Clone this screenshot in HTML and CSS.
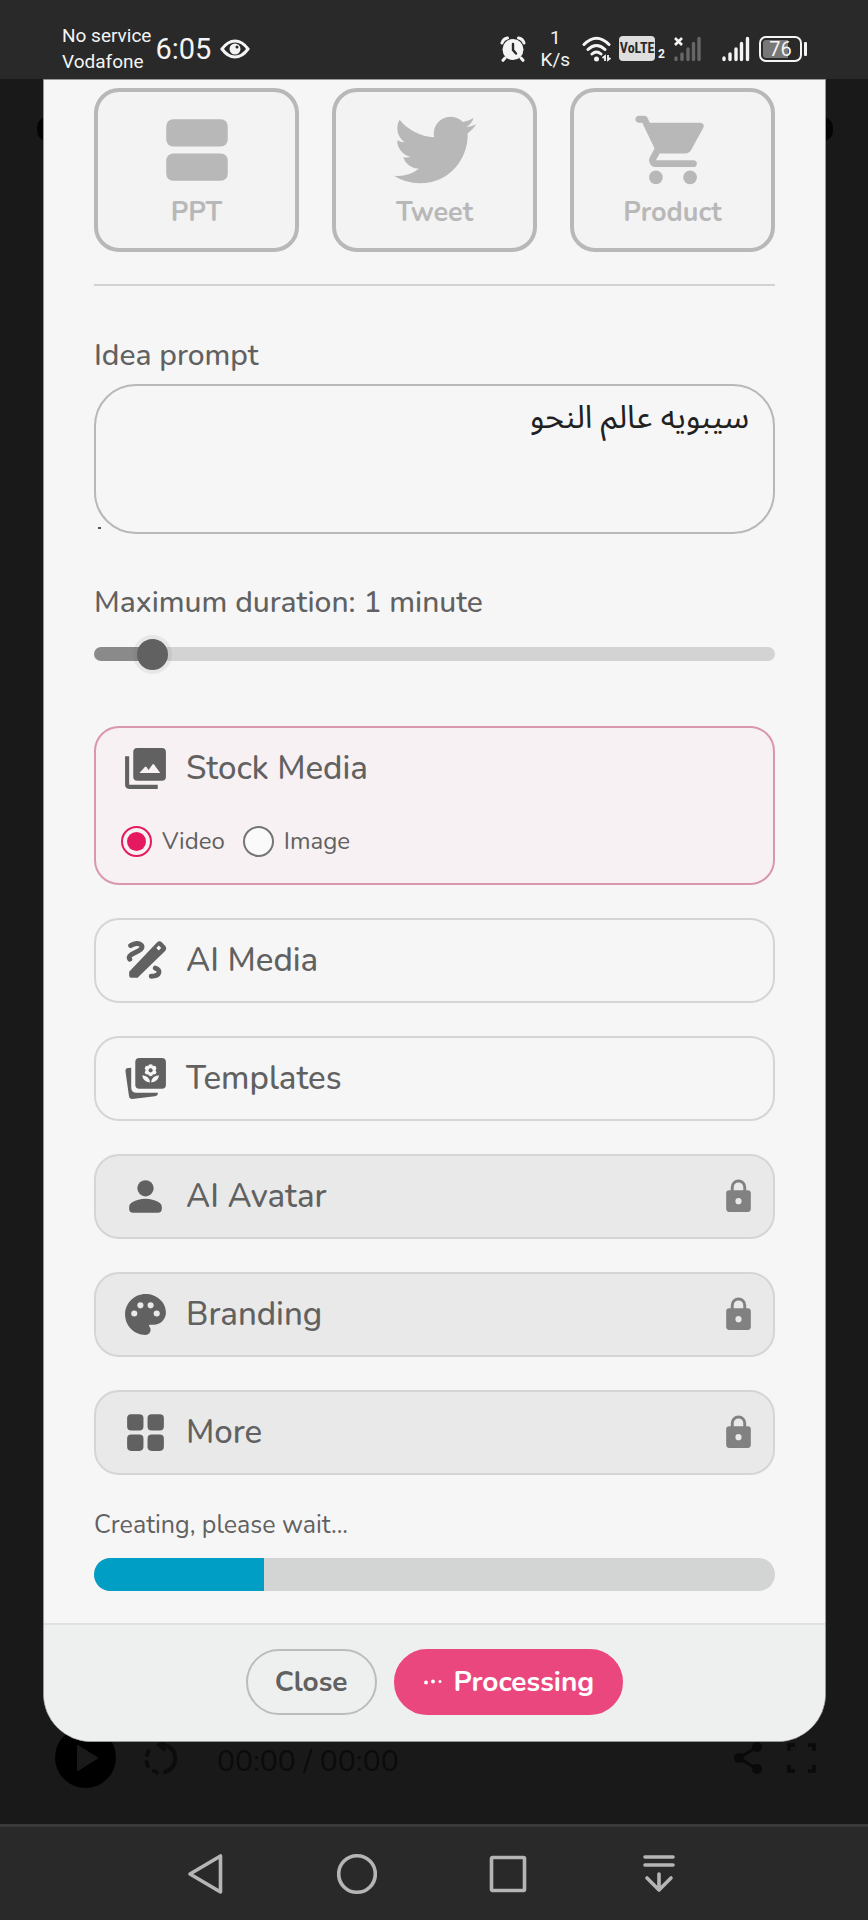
FILE: index.html
```html
<!DOCTYPE html>
<html lang="en">
<head>
<meta charset="utf-8">
<meta name="viewport" content="width=device-width, initial-scale=1">
<title>Create video</title>
<link rel="stylesheet" href="styles.css">
</head>
<body>
<header class="status">
  <div class="status-left">
    <div class="carrier"><span>No service</span><span>Vodafone</span></div>
    <span class="clock">6:05</span>
    <svg class="eye" width="30" height="20" viewBox="0 0 30 20"><path d="M2 10C6 4.500 10 2 15 2s9 2.500 13 8c-4 5.500-8 8-13 8S6 15.500 2 10z" fill="none" stroke="#f4f4f4" stroke-width="3"/><circle cx="15" cy="10" r="5.500" fill="#f4f4f4"/><circle cx="17" cy="8" r="1.500" fill="#292929"/></svg>
  </div>
  <div class="status-right">
    <svg width="26" height="26" viewBox="0 0 26 26"><g stroke="#f4f4f4" stroke-width="3" stroke-linecap="round" fill="none"><path d="M2 7Q3 3 7.500 2M24 7Q23 3 18.500 2M5 22l-2 2.300M21 22l2 2.300"/></g><circle cx="13" cy="13.500" r="10.500" fill="#f4f4f4"/><path d="M13 8v6l3 3.500" fill="none" stroke="#292929" stroke-width="2.400" stroke-linecap="round"/></svg>
    <div class="speed"><span>1</span><span>K/s</span></div>
    <svg width="30" height="26" viewBox="0 0 30 26"><g fill="none" stroke="#f4f4f4" stroke-width="3" stroke-linecap="round"><path d="M2 8.500Q14.500-4 27 8.500M6 13.500q8.500-8 17 0M10 18q4.500-4 9 0"/></g><circle cx="14.500" cy="23" r="2.500" fill="#f4f4f4"/><path d="M20.500 22l2.500-2v5M26 19v5l2.500-2" fill="none" stroke="#f4f4f4" stroke-width="1.800"/></svg>
    <div class="volte"><span class="volte-box">VoLTE</span><span class="volte-sim">2</span></div>
    <svg class="sig-off" width="28" height="26" viewBox="0 0 28 26"><g stroke="#666" stroke-width="3.400" stroke-linecap="round"><path d="M3 22v1.500M9 18v5.500M15 13v10.500M20.500 7.500v16M26 2.500v21"/></g><path d="M2 2l7 7M9 2l-7 7" stroke="#f4f4f4" stroke-width="2.600"/></svg>
    <svg class="sig-on" width="28" height="26" viewBox="0 0 28 26"><g stroke="#f4f4f4" stroke-width="3.400" stroke-linecap="round"><path d="M2 22v1.500M8 18v5.500M14 13v10.500M19.500 7.500v16M25.500 2.500v21"/></g></svg>
    <div class="battery"><span class="battery-body">76</span><i class="battery-tip"></i></div>
  </div>
</header>

<div class="stage">
  <div class="backdrop">
    <i class="gear"></i><i class="knob"></i>
    <div class="player">
      <span class="play"><svg width="61" height="61" viewBox="0 0 61 61"><path d="M23 19v24l19-12z" fill="#1a1a1a" stroke="#1a1a1a" stroke-width="2" stroke-linejoin="round"/></svg></span>
      <svg class="rotate" width="34" height="34" viewBox="0 0 34 34" fill="none" stroke="#0c0c0c" stroke-width="4" stroke-linecap="round"><path d="M17 3.500a14 14 0 0 1 4 27.500M20 0l-5 4 5 4M13 31.500l-3-1.500M4 25l-1.500-4M3 14l1.500-4"/></svg>
      <span class="time">00:00 / 00:00</span>
      <svg class="share" width="28" height="34" viewBox="0 0 28 34"><path d="M23 6L5 17l18 11" fill="none" stroke="#0a0a0a" stroke-width="3"/><g fill="#0a0a0a"><circle cx="23" cy="6" r="5"/><circle cx="5" cy="17" r="5"/><circle cx="23" cy="28" r="5"/></g></svg>
      <svg width="29" height="30" viewBox="0 0 29 30" fill="none" stroke="#0a0a0a" stroke-width="3.500"><path d="M2 8V2h6M21 2h6v6M27 22v6h-6M8 28H2v-6"/></svg>
    </div>
  </div>

  <main class="modal">
    <div class="content">
      <div class="sources">
        <button class="source" type="button"><svg class="source-icon" viewBox="0 0 24 24"><rect x="3" y="3" width="18" height="8" rx="2"/><rect x="3" y="13" width="18" height="8" rx="2"/></svg>PPT</button>
        <button class="source" type="button"><svg class="source-icon" viewBox="0 0 24 24"><path d="M23.953 4.570a10 10 0 0 1-2.825.775 4.958 4.958 0 0 0 2.163-2.723c-.951.555-2.005.959-3.127 1.184a4.920 4.920 0 0 0-8.384 4.482C7.690 8.095 4.067 6.130 1.640 3.162a4.822 4.822 0 0 0-.666 2.475c0 1.710.870 3.213 2.188 4.096a4.904 4.904 0 0 1-2.228-.616v.060a4.923 4.923 0 0 0 3.946 4.827 4.996 4.996 0 0 1-2.212.085 4.936 4.936 0 0 0 4.604 3.417 9.867 9.867 0 0 1-6.102 2.105c-.390 0-.779-.023-1.170-.067a13.995 13.995 0 0 0 7.557 2.209c9.053 0 13.998-7.496 13.998-13.985 0-.210 0-.420-.015-.630A9.935 9.935 0 0 0 24 4.590z"/></svg>Tweet</button>
        <button class="source" type="button"><svg class="source-icon" viewBox="0 0 24 24"><circle cx="7" cy="20" r="2"/><circle cx="17" cy="20" r="2"/><path d="M1 3c0 .550.450 1 1 1h1l3.600 7.590-1.350 2.440C4.520 15.370 5.480 17 7 17h11c.550 0 1-.450 1-1s-.450-1-1-1H7l1.100-2h7.450c.750 0 1.410-.410 1.750-1.030l3.580-6.490A.996.996 0 0 0 20.010 4H5.210l-.670-1.430A1 1 0 0 0 3.640 2H2c-.550 0-1 .450-1 1z"/></svg>Product</button>
      </div>
      <hr class="rule">

      <label class="label" for="prompt">Idea prompt</label>
      <div class="prompt-wrap">
        <textarea class="prompt" id="prompt" dir="rtl" lang="ar" rows="3">سيبويه عالم النحو</textarea>
        <i class="grip"></i>
      </div>

      <label class="label" for="duration">Maximum duration: 1 minute</label>
      <input class="slider" id="duration" type="range" min="0" max="15" value="1">

      <div class="options">
        <section class="option selected">
          <div class="option-head">
            <svg class="option-icon" viewBox="0 0 24 24"><path fill-rule="evenodd" d="M8 2h12a2 2 0 0 1 2 2v12a2 2 0 0 1-2 2H8a2 2 0 0 1-2-2V4a2 2 0 0 1 2-2zm1 12.200h10.200l-3-4.200q-.400-.500-.800 0l-1.900 2.700-1-1.400q-.400-.500-.800 0z"/><path d="M2 6h2v14h14v2H4a2 2 0 0 1-2-2z"/></svg>
            <span>Stock Media</span>
          </div>
          <div class="radios">
            <label class="radio"><input type="radio" name="kind" checked>Video</label>
            <label class="radio"><input type="radio" name="kind">Image</label>
          </div>
        </section>
        <button class="option" type="button">
          <svg class="option-icon" viewBox="0 0 24 24"><g fill="none" stroke="#616161" stroke-width="2.400" stroke-linecap="round"><path d="M4.700 4.700c2-1.200 4.300-1.500 5.300-.200 1 1.500-.800 2.600-3 3.600-2.600 1.100-3.500 2-2.700 3.300M16.800 15.700c3 1 2.300 4-2 4"/></g><path fill-rule="evenodd" d="M4 17.500L17.600 3.200q1.300-1.200 2.500 0l1.500 1.600q1.100 1.200 0 2.500L8.100 20.500H5q-1 0-1-1zM18.500 4.700l-1.200 1.200 1.200 1.200 1.200-1.200z"/></svg>
          <span>AI Media</span>
        </button>
        <button class="option" type="button">
          <svg class="option-icon" viewBox="0 0 24 24"><rect x="7" y="2" width="15" height="15" rx="2"/><path d="M5 6.700v9.600Q5 19 7.700 19h10.400q0 1.500-1.500 1.700L5.500 22q-1.400 0-1.600-1.400L2.200 8.600Q2 7.100 3.600 6.900z"/><g fill="#f6f6f6"><circle cx="14.500" cy="6.200" r="1.200"/><circle cx="12.900" cy="7" r="1.200"/><circle cx="16.100" cy="7" r="1.200"/><circle cx="12.900" cy="8.900" r="1.200"/><circle cx="16.100" cy="8.900" r="1.200"/><circle cx="14.500" cy="9.700" r="1.200"/><path d="M14.200 13.900q-3.500-.200-3.800-3.500 3.500.300 3.800 3.500zM14.800 13.900q3.500-.200 3.800-3.500-3.500.300-3.800 3.500z"/></g><circle cx="14.500" cy="8" r="1"/></svg>
          <span>Templates</span>
        </button>
        <button class="option locked" type="button">
          <svg class="option-icon" viewBox="0 0 24 24"><circle cx="12" cy="8" r="4"/><path d="M4 17.200c0-1.100.600-1.900 1.500-2.400 1.900-1.100 4.100-1.700 6.500-1.700s4.600.600 6.500 1.700c.900.500 1.500 1.300 1.500 2.400v.800a2 2 0 0 1-2 2H6a2 2 0 0 1-2-2z"/></svg>
          <span>AI Avatar</span>
          <svg class="lock" viewBox="0 0 24 24"><path fill-rule="evenodd" d="M18 8h-1V6A5 5 0 0 0 7 6v2H6a2 2 0 0 0-2 2v10a2 2 0 0 0 2 2h12a2 2 0 0 0 2-2V10a2 2 0 0 0-2-2zm-6 9a2 2 0 1 1 0-4 2 2 0 0 1 0 4zM8.900 8V6a3.100 3.100 0 0 1 6.200 0v2z"/></svg>
        </button>
        <button class="option locked" type="button">
          <svg class="option-icon" viewBox="0 0 24 24"><path d="M12 2C6.490 2 2 6.490 2 12s4.490 10 10 10a2.500 2.500 0 0 0 2.500-2.500c0-.610-.230-1.200-.640-1.670a.528.528 0 0 1-.130-.330c0-.280.220-.500.500-.500H16c3.310 0 6-2.690 6-6 0-4.960-4.490-9-10-9zm5.500 11a1.500 1.500 0 1 1 0-3 1.500 1.500 0 0 1 0 3zm-3-4a1.500 1.500 0 1 1 0-3 1.500 1.500 0 0 1 0 3zm-5 0a1.500 1.500 0 1 1 0-3 1.500 1.500 0 0 1 0 3zm-3 4a1.500 1.500 0 1 1 0-3 1.500 1.500 0 0 1 0 3z"/></svg>
          <span>Branding</span>
          <svg class="lock" viewBox="0 0 24 24"><path fill-rule="evenodd" d="M18 8h-1V6A5 5 0 0 0 7 6v2H6a2 2 0 0 0-2 2v10a2 2 0 0 0 2 2h12a2 2 0 0 0 2-2V10a2 2 0 0 0-2-2zm-6 9a2 2 0 1 1 0-4 2 2 0 0 1 0 4zM8.900 8V6a3.100 3.100 0 0 1 6.200 0v2z"/></svg>
        </button>
        <button class="option locked" type="button">
          <svg class="option-icon" viewBox="0 0 24 24"><rect x="3" y="3" width="8" height="8" rx="2"/><rect x="13" y="3" width="8" height="8" rx="2"/><rect x="3" y="13" width="8" height="8" rx="2"/><rect x="13" y="13" width="8" height="8" rx="2"/></svg>
          <span>More</span>
          <svg class="lock" viewBox="0 0 24 24"><path fill-rule="evenodd" d="M18 8h-1V6A5 5 0 0 0 7 6v2H6a2 2 0 0 0-2 2v10a2 2 0 0 0 2 2h12a2 2 0 0 0 2-2V10a2 2 0 0 0-2-2zm-6 9a2 2 0 1 1 0-4 2 2 0 0 1 0 4zM8.900 8V6a3.100 3.100 0 0 1 6.200 0v2z"/></svg>
        </button>
      </div>

      <p class="wait" id="wait">Creating, please wait...</p>
      <div class="progress" role="progressbar" aria-labelledby="wait" aria-valuenow="25"><div class="progress-fill" style="width:25%"></div></div>
    </div>
    <footer class="actions">
      <button class="btn" type="button">Close</button>
      <button class="btn primary" type="button"><svg width="20" height="6" viewBox="0 0 20 6" fill="#fff"><circle cx="3" cy="3.500" r="1.900"/><circle cx="10" cy="2.500" r="1.900"/><circle cx="17" cy="2.500" r="1.500"/></svg>Processing</button>
    </footer>
  </main>
</div>

<nav class="navbar">
  <button class="nav-btn" type="button" aria-label="Back"><svg width="40" height="44" viewBox="0 0 40 44"><path d="M34.500 4v36L4 22z"/></svg></button>
  <button class="nav-btn" type="button" aria-label="Home"><svg width="40" height="44" viewBox="0 0 40 44"><circle cx="20" cy="22" r="18.300"/></svg></button>
  <button class="nav-btn" type="button" aria-label="Recents"><svg width="40" height="44" viewBox="0 0 40 44"><rect x="3.500" y="5.500" width="33" height="33" rx="1"/></svg></button>
  <button class="nav-btn" type="button" aria-label="Hide bar"><svg width="40" height="44" viewBox="0 0 40 44"><path d="M6 5h28M6 13h28M20 22v16M8 26l12 12 12-12" stroke-linecap="round"/></svg></button>
</nav>
</body>
</html>
```
FILE: styles.css
```css
* { box-sizing: border-box; }

body {
  margin: 0;
  min-height: 100vh;
  display: flex;
  flex-direction: column;
  background: #191919;
  color: #616161;
  font-family: Nunito, Lato, "Open Sans", sans-serif;
  font-size: 28px;
}

button {
  font: inherit;
  color: inherit;
  background: none;
  border: 0;
  padding: 0;
}

svg { display: block; flex: none; }

/* status bar */
.status {
  height: 79px;
  padding: 18px 61px 0 62px;
  display: flex;
  align-items: center;
  justify-content: space-between;
  background: #292929;
  color: #f4f4f4;
  font-family: Roboto, sans-serif;
}
.status-left, .status-right { display: flex; align-items: center; }
.carrier {
  display: flex;
  flex-direction: column;
  font-size: 19px;
  line-height: 26px;
}
.clock { margin: 0 9px 0 4px; font-size: 29px; }
.speed {
  display: flex;
  flex-direction: column;
  align-items: center;
  margin: 0 12px 0 15px;
  font-size: 19px;
  line-height: 22px;
}
.volte { display: flex; align-items: flex-end; gap: 3px; margin: 0 8px 0 7px; }
.volte-box {
  width: 36px;
  border-radius: 4px;
  background: #dedede;
  color: #292929;
  font: bold 14px/25px "Liberation Sans Narrow", "Roboto Condensed", sans-serif;
  text-align: center;
}
.volte-sim { font-size: 12px; line-height: 14px; font-weight: 700; }
.sig-on { margin: 0 9px 0 21px; }
.battery { display: flex; align-items: center; gap: 2px; }
.battery-body {
  width: 43px;
  height: 26px;
  border: 2px solid #f4f4f4;
  border-radius: 7px;
  background: linear-gradient(90deg, #777 72%, #292929 72%) content-box;
  padding: 2px;
  font-size: 20px;
  line-height: 19px;
  text-align: center;
}
.battery-tip { width: 3px; height: 14px; background: #f4f4f4; border-radius: 1px; }

/* page dimmed behind the dialog */
.stage { position: relative; flex: 1; padding: 0 42px 82px 43px; }
.backdrop { position: absolute; inset: 0; }
.gear, .knob { position: absolute; top: 38px; width: 20px; height: 24px; border-radius: 12px; background: #050505; }
.gear { left: 37px; }
.knob { right: 35px; }
.player {
  position: absolute;
  left: 55px;
  right: 52px;
  bottom: 36px;
  display: flex;
  align-items: center;
  color: #0b0b0b;
}
.play { border-radius: 50%; background: #000; }
.rotate { margin-left: 28px; }
.time { flex: 1; margin-left: 39px; padding-top: 8px; font-size: 30px; }
.share { margin-right: 25px; }

/* dialog */
.modal {
  position: relative;
  overflow: hidden;
  border: 1px solid #999;
  border-radius: 0 0 48px 48px;
  background: #f6f6f6;
}
.content { padding: 8px 50px 32px; }
.sources { display: grid; grid-template-columns: repeat(3, 1fr); gap: 33px; }
.source {
  display: flex;
  flex-direction: column;
  align-items: center;
  gap: 3px;
  padding: 17px 0;
  border: 4px solid #b8b8b8;
  border-radius: 25px;
  background: #f3f3f3;
  color: #b8b8b8;
  font-size: 27px;
  line-height: 37px;
  font-weight: 700;
}
.source-icon { width: 82px; height: 82px; fill: #b8b8b8; }
.rule { margin: 32px 0 50px; border: 0; border-top: 2px solid #d2d2d2; }
.label { display: block; line-height: 40px; font-size: 30px; font-weight: 500; }
.prompt-wrap { position: relative; margin: 8px 0 49px; }
.prompt {
  display: block;
  width: 100%;
  height: 150px;
  padding: 8px 24px;
  border: 2px solid #b8b8b8;
  border-radius: 42px;
  background: transparent;
  color: #212121;
  font: 32px/48px "Noto Sans Arabic", "DejaVu Sans", sans-serif;
  resize: none;
  outline: 0;
}
.grip { position: absolute; left: 4px; bottom: 5px; width: 3px; height: 2px; background: #555; }

.slider {
  display: block;
  appearance: none;
  width: 100%;
  height: 31px;
  margin: 15px 0 57px;
  background: none;
}
.slider::-webkit-slider-runnable-track {
  height: 14px;
  border-radius: 7px;
  background: linear-gradient(90deg, #8a8a8a 8%, #d3d3d3 8%);
}
.slider::-webkit-slider-thumb {
  appearance: none;
  width: 31px;
  height: 31px;
  margin-top: -8px;
  border-radius: 50%;
  background: #616161;
  box-shadow: 0 0 0 4px rgba(97, 97, 97, 0.1);
}

.options { display: flex; flex-direction: column; gap: 33px; }
.option {
  display: flex;
  align-items: center;
  gap: 16px;
  padding: 16px 16px 16px 25px;
  border: 2px solid #d5d5d5;
  border-radius: 25px;
  font-size: 33px;
  line-height: 40px;
  font-weight: 500;
  text-align: left;
}
.option-icon { width: 49px; height: 49px; fill: #616161; }
.locked { background: #e9e9e9; }
.lock { width: 37px; height: 37px; margin-left: auto; fill: #818181; }
.selected {
  flex-direction: column;
  align-items: stretch;
  gap: 32px;
  padding-bottom: 26px;
  border-color: #d996ad;
  background: #f7f1f3;
}
.option-head { display: flex; align-items: center; gap: 16px; }
.radios { display: flex; gap: 18px; font-size: 24px; line-height: 32px; font-weight: 400; }
.radio { display: flex; align-items: center; gap: 10px; }
.radio input {
  appearance: none;
  width: 31px;
  height: 31px;
  margin: 0;
  border: 2px solid #757575;
  border-radius: 50%;
  background: #fafafa;
}
.radio input:checked {
  padding: 4px;
  border-color: #e5195f;
  background: #e5195f content-box;
}

.wait { margin: 34px 0 17px; font-size: 25px; line-height: 32px; }
.progress { height: 33px; border-radius: 17px; background: #d3d5d4; overflow: hidden; }
.progress-fill { height: 100%; background: #009dc5; }

.actions {
  display: flex;
  justify-content: center;
  gap: 17px;
  padding: 24px 24px 26px;
  border-top: 2px solid #dfe1e0;
  background: #eef0ef;
}
.btn {
  display: flex;
  align-items: center;
  gap: 11px;
  height: 66px;
  padding: 0 27px;
  border: 2px solid #bcbcbc;
  border-radius: 33px;
  font-size: 28px;
  font-weight: 700;
}
.primary { border-color: #eb477f; background: #eb477f; color: #fff; }

/* system navigation */
.navbar {
  height: 96px;
  padding: 0 134px 0 131px;
  display: flex;
  align-items: center;
  justify-content: space-between;
  border-top: 3px solid #3a3a3a;
  background: #292929;
}
.nav-btn { width: 150px; display: flex; justify-content: center; }
.nav-btn svg { fill: none; stroke: #b5b5b5; stroke-width: 3.600; stroke-linejoin: round; }
```
